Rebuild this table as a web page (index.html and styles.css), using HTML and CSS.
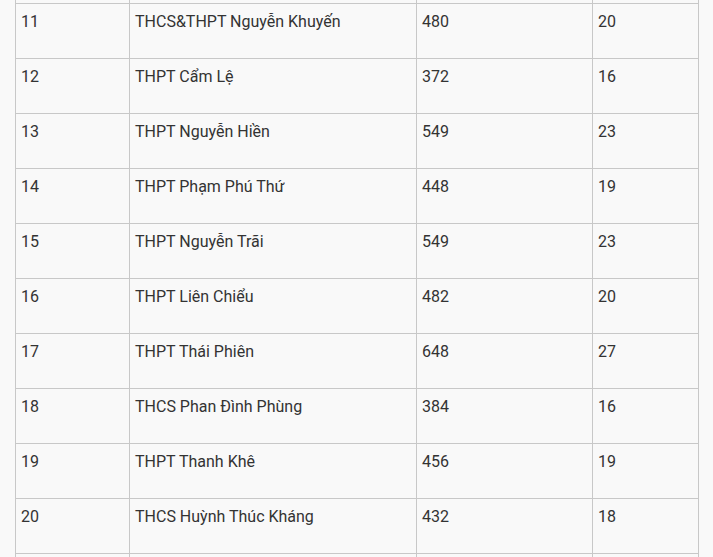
FILE: index.html
```html
<!DOCTYPE html>
<html>
<head>
<meta charset="utf-8">
<link rel="stylesheet" href="styles.css">
</head>
<body>
<div class="wrap">
<table class="tbl">
<colgroup><col class="c1"><col class="c2"><col class="c3"><col class="c4"></colgroup>
<tbody>
<tr><td></td><td></td><td></td><td></td></tr>
<tr><td>11</td><td>THCS&amp;THPT Nguyễn Khuyến</td><td>480</td><td>20</td></tr>
<tr><td>12</td><td>THPT Cẩm Lệ</td><td>372</td><td>16</td></tr>
<tr><td>13</td><td>THPT Nguyễn Hiền</td><td>549</td><td>23</td></tr>
<tr><td>14</td><td>THPT Phạm Phú Thứ</td><td>448</td><td>19</td></tr>
<tr><td>15</td><td>THPT Nguyễn Trãi</td><td>549</td><td>23</td></tr>
<tr><td>16</td><td>THPT Liên Chiểu</td><td>482</td><td>20</td></tr>
<tr><td>17</td><td>THPT Thái Phiên</td><td>648</td><td>27</td></tr>
<tr><td>18</td><td>THCS Phan Đình Phùng</td><td>384</td><td>16</td></tr>
<tr><td>19</td><td>THPT Thanh Khê</td><td>456</td><td>19</td></tr>
<tr><td>20</td><td>THCS Huỳnh Thúc Kháng</td><td>432</td><td>18</td></tr>
<tr><td></td><td></td><td></td><td></td></tr>
</tbody>
</table>
</div>
</body>
</html>
```
FILE: styles.css
```css
html, body {
  margin: 0;
  padding: 0;
  background: #f9f9f9;
  overflow: hidden;
}
.wrap {
  padding-left: 15px;
  height: 557px;
  overflow: hidden;
}
.tbl {
  border-collapse: collapse;
  margin-top: -52px;
  font-family: Roboto, "Liberation Sans", sans-serif;
  font-size: 16px;
  line-height: 24px;
  color: #333;
  table-layout: fixed;
  width: 683px;
}
.c1 { width: 114px; }
.c2 { width: 287px; }
.c3 { width: 176px; }
.c4 { width: 106px; }
.tbl td {
  border: 1px solid #c8c8c8;
  height: 55px;
  box-sizing: border-box;
  padding: 6px 5px 5px;
  vertical-align: top;
}
```
